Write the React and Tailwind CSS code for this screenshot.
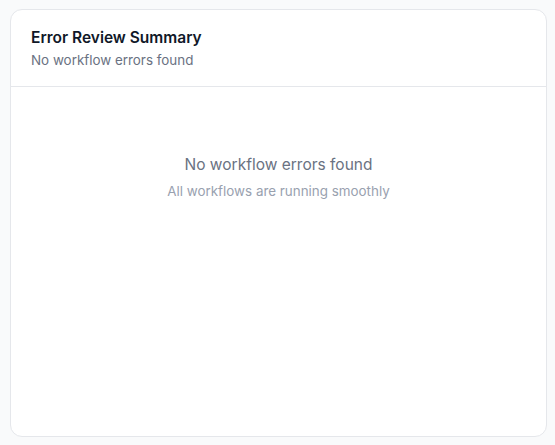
export default function App() {
    return (
        <div className="min-h-[445px] bg-[#f9fafb] pl-[10px] pt-[9px] pr-2 pb-2" style={{ fontFamily: 'Inter, "Noto Sans", sans-serif' }}>
            <div className="h-[428px] bg-white border border-gray-200 rounded-xl flex flex-col overflow-hidden">
                {/* Header */}
                <div className="px-5 py-4 border-b border-gray-200">
                    <h2 className="text-[15.5px] font-semibold text-gray-900 leading-6">Error Review Summary</h2>
                    <p className="text-[13.4px] text-gray-500 leading-5">No workflow errors found</p>
                </div>

                {/* Body */}
                <div className="flex-1 flex flex-col items-center pt-[66px]">
                    <p className="text-[15.5px] text-gray-500 leading-6">No workflow errors found</p>
                    <p className="text-[13.4px] text-gray-400 leading-5 mt-1">All workflows are running smoothly</p>
                </div>
            </div>
        </div>
    )
}
